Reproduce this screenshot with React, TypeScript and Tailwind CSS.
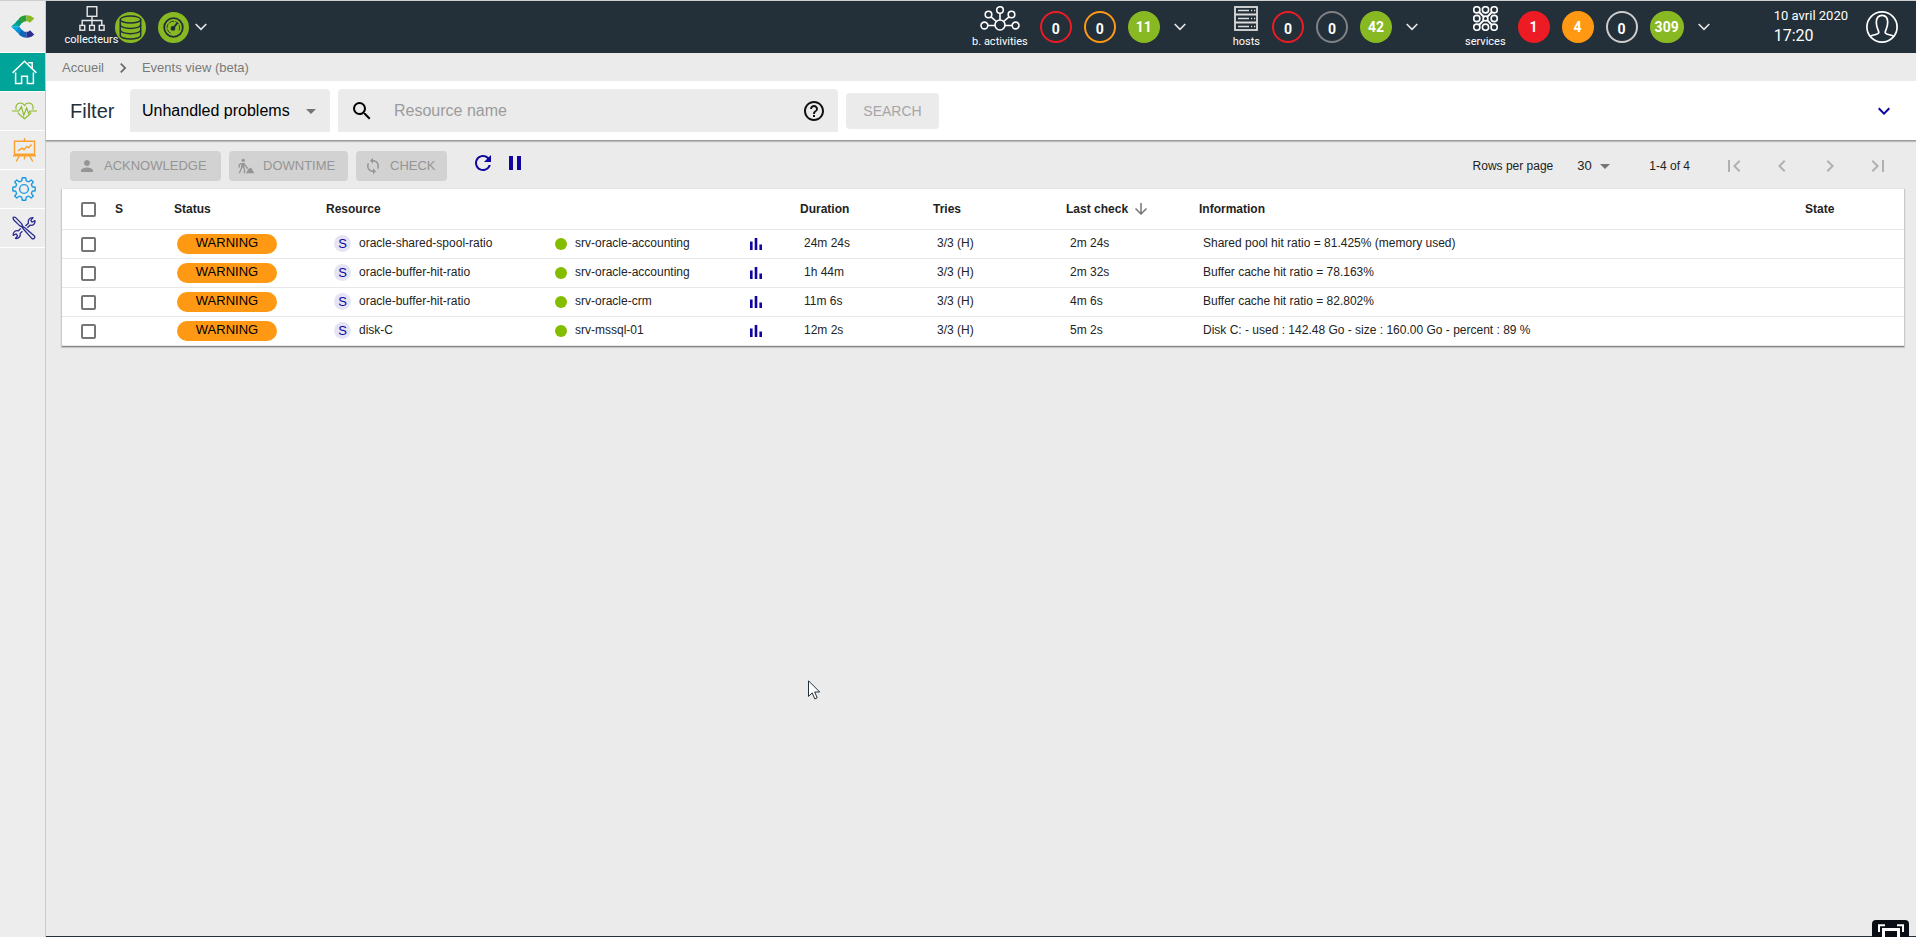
import React from "react";
import {
  MdArrowDownward,
  MdArrowDropDown,
  MdChevronLeft,
  MdChevronRight,
  MdExpandMore,
  MdFirstPage,
  MdHelpOutline,
  MdLastPage,
  MdLoop,
  MdPause,
  MdPerson,
  MdRefresh,
  MdSearch,
} from "react-icons/md";

type Tone = "redLine" | "orangeLine" | "grayLine" | "lightLine" | "green" | "red" | "orange";

const tones: Record<Tone, string> = {
  redLine: "border-2 border-[#ed1c24] pt-1",
  orangeLine: "border-2 border-[#ff9913] pt-1",
  grayLine: "border-2 border-[#818285] pt-1",
  lightLine: "border-2 border-[#cdcdcd] pt-1",
  green: "bg-[#88b922]",
  red: "bg-[#ed1c24]",
  orange: "bg-[#ff9913]",
};

function Counter({ value, tone }: { value: number; tone: Tone }) {
  return (
    <a
      href="#counter"
      className={`flex h-8 min-w-8 items-center justify-center rounded-full px-[5px] font-[Roboto,sans-serif] text-sm leading-4 font-bold text-white ${tones[tone]}`}
    >
      {value}
    </a>
  );
}

function HeaderChevron({ label }: { label: string }) {
  return (
    <button type="button" aria-label={label} className="ml-[2px] flex">
      <svg width="12" height="8" viewBox="0 0 12 8" fill="none" stroke="#e6e6e6" strokeWidth="1.6">
        <path d="M0.7 1 L6 6.4 L11.3 1" />
      </svg>
    </button>
  );
}

function Stack({ label, tight = false, children }: { label: string; tight?: boolean; children: React.ReactNode }) {
  return (
    <div className={`flex h-full flex-col items-center pt-[5px] ${tight ? "gap-[2px]" : "gap-1"}`}>
      {children}
      <span className="font-[Roboto,sans-serif] text-[11px] leading-[14px] whitespace-nowrap text-white">{label}</span>
    </div>
  );
}

function PollerIcon() {
  return (
    <svg width="26" height="25" viewBox="0 0 26 25" fill="none" stroke="#e8e8e8" strokeWidth="1.4">
      <rect x="8.2" y="0.7" width="9.6" height="9.6" />
      <path d="M13 10.5V19M3.2 19V14.5H22.8V19" />
      <rect x="0.9" y="19.4" width="4.8" height="4.8" />
      <rect x="10.6" y="19.4" width="4.8" height="4.8" />
      <rect x="20.3" y="19.4" width="4.8" height="4.8" />
    </svg>
  );
}

function ActivitiesIcon() {
  return (
    <svg width="40" height="25" viewBox="0 0 40 25" fill="none" stroke="#ffffff" strokeWidth="1.6">
      <circle cx="20" cy="19" r="5" />
      <circle cx="20" cy="4" r="3.3" />
      <circle cx="8.5" cy="8.5" r="3.3" />
      <circle cx="31.5" cy="8.5" r="3.3" />
      <circle cx="4.4" cy="19.5" r="3.4" />
      <circle cx="35.6" cy="19.5" r="3.4" />
      <path d="M20 7.3V14M11 10.8L16.4 15.5M29 10.8L23.6 15.5M7.8 19.5H15M25 19.5H32.2" />
    </svg>
  );
}

function HostsIcon() {
  return (
    <svg width="24" height="25" viewBox="0 0 24 25" fill="none" stroke="#dcdcdc" strokeWidth="1.8">
      <rect x="1" y="1" width="22" height="23" />
      <path d="M1 8.5H23M1 16.5H23" />
      <path d="M4 4.6H15M4 12.5H15M4 20.4H15" strokeWidth="1.5" />
      <path d="M17 4.6H18.2M20 4.6H21.2M17 12.5H18.2M20 12.5H21.2M17 20.4H18.2M20 20.4H21.2" strokeWidth="1.5" />
    </svg>
  );
}

function ServicesIcon() {
  const spots = [3.8, 12.5, 21.2];
  return (
    <svg width="25" height="25" viewBox="0 0 25 25" fill="none" stroke="#ffffff" strokeWidth="1.6">
      {spots.map((y) => spots.map((x) => <circle key={`${x}-${y}`} cx={x} cy={y} r={x === 12.5 && y === 12.5 ? 2.4 : 3.1} />))}
      <path d="M6 6L10.6 10.6M19 6L14.4 10.6M6 19L10.6 14.4M19 19L14.4 14.4" strokeWidth="2" />
    </svg>
  );
}

function DatabaseIcon() {
  return (
    <svg width="31" height="31" viewBox="0 0 31 31" fill="none" stroke="#232f39" strokeWidth="1.5">
      <circle cx="15.5" cy="15.5" r="15.5" fill="#88b922" stroke="none" />
      <ellipse cx="15.5" cy="7.6" rx="10.2" ry="3.5" />
      <path d="M5.3 7.6V23.4C5.3 25.4 9.8 27 15.5 27S25.7 25.4 25.7 23.4V7.6" />
      <path d="M5.3 12.8C5.3 14.8 9.8 16.4 15.5 16.4S25.7 14.8 25.7 12.8M5.3 18.1C5.3 20.1 9.8 21.7 15.5 21.7S25.7 20.1 25.7 18.1" />
    </svg>
  );
}

function LatencyIcon() {
  return (
    <svg width="31" height="31" viewBox="0 0 31 31" fill="none" stroke="#232f39" strokeWidth="1.6">
      <circle cx="15.5" cy="15.5" r="15.5" fill="#88b922" stroke="none" />
      <circle cx="15.5" cy="15.5" r="9.3" strokeWidth="1.8" />
      <path d="M12.6 21.2A6.3 6.3 0 1 1 20.9 18.6" strokeDasharray="5 1" strokeWidth="0.9" />
      <circle cx="15" cy="16.4" r="1.6" fill="#232f39" />
      <path d="M15.4 16L19.6 10.6" strokeWidth="1.8" />
    </svg>
  );
}

function UserIcon() {
  return (
    <svg width="32" height="32" viewBox="0 0 32 32" fill="none" stroke="#ffffff" strokeWidth="1.7">
      <circle cx="16" cy="16" r="15.1" />
      <path d="M4 25.4C7 23.4 12.5 23.8 12.8 21.6C13 19.4 10.3 17.4 10.3 11.3C10.3 6.8 12.6 4.3 16 4.3S21.7 6.8 21.7 11.3C21.7 17.4 19 19.4 19.2 21.6C19.5 23.8 25 23.4 28 25.4" />
    </svg>
  );
}

function Logo() {
  return (
    <svg width="24" height="23" viewBox="0 0 24 23">
      <path d="M0 11.5L7.5 5.2L10 8.4L8.4 11.5Z" fill="#00a79c" />
      <path d="M0 11.5L8.4 11.5L10 14.9L7.5 18.2Z" fill="#00a8e8" />
      <path d="M4.5 7.5L9.5 2.2L12.6 7L10 8.6L8.6 11Z" fill="#009e7f" />
      <path d="M8.2 3.2C10.4 1.2 12.8 0.3 15.3 0.3L15.6 6.2C13.2 6.2 11.4 6.9 10 8.8Z" fill="#2a9d35" />
      <path d="M15.3 0.3C18.6 0.2 21 1.4 23.2 3.6L19 7.8C18 6.8 17 6.2 15.6 6.2Z" fill="#88b922" />
      <path d="M4.5 15.4L9.5 20.7L12.8 16L10 14.2L8.6 12Z" fill="#0a8fdc" />
      <path d="M8.2 19.8C10.4 21.8 12.8 22.7 15.3 22.7L15.6 16.8C13.2 16.8 11.4 16.1 10 14.2Z" fill="#1065b5" />
      <path d="M15.3 22.7C18.6 22.8 21 21.6 23.2 19.4L19 15.2C18 16.2 17 16.8 15.6 16.8Z" fill="#2b2f92" />
    </svg>
  );
}

function HomeIcon() {
  return (
    <svg width="25" height="25" viewBox="0 0 25 25" fill="none" stroke="#ffffff" strokeWidth="1.5">
      <path d="M0.6 12.9L12.5 1.2L24.4 12.9" />
      <path d="M16.2 2.8H20.2V8.4" />
      <path d="M3.6 12.5V23.6H9.6V16.2H15.4V23.6H21.4V12.5" />
    </svg>
  );
}

function HeartIcon() {
  return (
    <svg width="25" height="18" viewBox="0 0 25 18" fill="none" stroke="#88b922" strokeWidth="1.1">
      <path d="M4.2 7.6C3 3.6 5.4 1 8.2 1C10.2 1 11.8 2.2 12.5 3.6C13.2 2.2 14.8 1 16.8 1C19.6 1 22 3.6 20.8 7.6M5.8 10.6C7.4 13 10 14.8 12.5 16.8C15 14.8 17.6 13 19.2 10.6" />
      <path d="M0 9H6.8L9.4 4.6L11.8 13.4L14.6 5.8L16.6 11.4L17.8 9H25" />
    </svg>
  );
}

function ReportIcon() {
  return (
    <svg width="23" height="24" viewBox="0 0 23 24" fill="none" stroke="#f9a12e" strokeWidth="1.4">
      <path d="M11.5 0V3M1.5 3.2H21.5V16.2H1.5ZM0 17.8H23" />
      <path d="M5 12.8L9 10.2L11 11.8L14 8.4L15.5 9.8L18.6 6.6" />
      <path d="M6.4 18L3.2 23.4M16.6 18L19.8 23.4M11.5 18V21.6" />
    </svg>
  );
}

function GearIcon() {
  return (
    <svg width="24" height="24" viewBox="0 0 24 24" fill="none" stroke="#1b9be0" strokeWidth="1.4" strokeLinejoin="round">
      <circle cx="12" cy="12" r="4.4" />
      <path d="M10.2 0.8H13.8L14.3 3.8L16.8 4.8L19.2 3L21.3 5L19.4 7.4L20.3 9.8L23.2 10.3V13.7L20.3 14.2L19.4 16.6L21.3 19L19.2 21L16.8 19.2L14.3 20.2L13.8 23.2H10.2L9.7 20.2L7.2 19.2L4.8 21L2.7 19L4.6 16.6L3.7 14.2L0.8 13.7V10.3L3.7 9.8L4.6 7.4L2.7 5L4.8 3L7.2 4.8L9.7 3.8Z" />
    </svg>
  );
}

function ToolsIcon() {
  return (
    <svg width="24" height="24" viewBox="0 0 24 24" fill="none" stroke="#2a2b8f" strokeWidth="1.3" strokeLinejoin="round">
      <path d="M1 2.2C1 1.2 2.6 0.8 3.4 1.4L9.6 7.6L10.6 10.2L13.4 12.2L22.4 20C23.6 21.4 21.6 23.6 20 22.6L12 13.8L10 10.8L7.6 9.6L1.8 4Z" />
      <path d="M13.4 10L16.4 7.2C15.6 4.2 17.6 1.2 21 1.6L18.8 4.4L20 6.2L23 4.6C23.4 7.8 20.8 10 18 9.2L15.4 11.8" />
      <path d="M10.4 15.2L8.2 17.4C8.8 20.4 6.6 23 3.4 22.4L5.6 19.8L4.2 17.8L1.2 19.4C0.8 16.4 3.2 13.8 6.4 14.8L8.8 12.4" />
    </svg>
  );
}

function DowntimeIcon() {
  return (
    <svg width="18" height="18" viewBox="0 0 24 24" fill="none" stroke="currentColor" strokeWidth="1.8">
      <circle cx="8.4" cy="4.4" r="2.2" fill="currentColor" stroke="none" />
      <path d="M5.6 8.2L9.4 7.6L10.2 14L5.6 13.6Z" fill="currentColor" stroke="none" />
      <path d="M5.6 8.2L3 10.4V14M9 8.4L14.4 15.4M6.6 13L5.2 17L3 21.6M8.4 13L10 16.4V21.6" />
      <path d="M12 21.6L15 16.2L17.6 14.4H19L23 21.6Z" fill="currentColor" stroke="none" />
    </svg>
  );
}

function GraphIcon() {
  return (
    <svg width="12" height="12" viewBox="0 0 12 12" fill="#10069f">
      <path d="M0 3.6H2.6V12H0ZM4.7 0H7.3V12H4.7ZM9.4 6.6H12V12H9.4Z" />
    </svg>
  );
}

const menu = [
  { name: "Accueil", icon: <HomeIcon />, active: true },
  { name: "Supervision", icon: <HeartIcon />, active: false },
  { name: "Rapports", icon: <ReportIcon />, active: false },
  { name: "Configuration", icon: <GearIcon />, active: false },
  { name: "Administration", icon: <ToolsIcon />, active: false },
];

function Sidebar() {
  return (
    <nav className="flex w-[46px] shrink-0 flex-col border-r border-[#cbcbcb] bg-[#ededed]">
      <a href="#home" aria-label="Centreon" className="flex h-[52px] items-center justify-center border-b border-white">
        <Logo />
      </a>
      {menu.map((item) => (
        <a
          key={item.name}
          href="#menu"
          aria-label={item.name}
          className={`flex h-[39px] items-center justify-center border-b border-white pl-[3px] ${item.active ? "bg-[#00a499]" : ""}`}
        >
          {item.icon}
        </a>
      ))}
    </nav>
  );
}

function TopBar() {
  return (
    <header className="flex h-[52px] items-center bg-[#232f39] pr-[18px] pl-[22px]">
      <div className="flex h-full items-center">
        <div className="flex h-full w-[47px] justify-center">
          <Stack label="collecteurs" tight>
            <PollerIcon />
          </Stack>
        </div>
        <div className="flex items-center gap-3">
          <DatabaseIcon />
          <LatencyIcon />
        </div>
        <div className="ml-1 flex">
          <HeaderChevron label="collecteurs" />
        </div>
      </div>
      <div className="ml-auto flex h-full items-center gap-[47px]">
        <div className="flex h-full items-center gap-3">
          <Stack label="b. activities">
            <ActivitiesIcon />
          </Stack>
          <Counter value={0} tone="redLine" />
          <Counter value={0} tone="orangeLine" />
          <Counter value={11} tone="green" />
          <HeaderChevron label="b. activities" />
        </div>
        <div className="flex h-full items-center gap-3">
          <Stack label="hosts">
            <HostsIcon />
          </Stack>
          <Counter value={0} tone="redLine" />
          <Counter value={0} tone="grayLine" />
          <Counter value={42} tone="green" />
          <HeaderChevron label="hosts" />
        </div>
        <div className="flex h-full items-center gap-3">
          <Stack label="services">
            <ServicesIcon />
          </Stack>
          <Counter value={1} tone="red" />
          <Counter value={4} tone="orange" />
          <Counter value={0} tone="lightLine" />
          <Counter value={309} tone="green" />
          <HeaderChevron label="services" />
        </div>
      </div>
      <div className="ml-16 font-[Roboto,sans-serif] text-white">
        <div className="text-[13px] leading-[18px]">10 avril 2020</div>
        <div className="text-base leading-[22px]">17:20</div>
      </div>
      <button type="button" aria-label="Profil" className="ml-[18px] flex">
        <UserIcon />
      </button>
    </header>
  );
}

function FilterBar() {
  return (
    <section className="flex h-[60px] items-center gap-2 border-b border-[#9c9c9c] bg-white pr-5 pl-6 shadow-[0_1px_1px_rgba(0,0,0,0.2)]">
      <h6 className="w-[52px] text-xl leading-6 text-[#232f39]">Filter</h6>
      <div className="relative w-[200px]">
        <select
          aria-label="Filter"
          className="h-[43px] w-full appearance-none rounded-t bg-[#ebebeb] pl-3 text-base text-black outline-none"
        >
          <option>Unhandled problems</option>
        </select>
        <MdArrowDropDown className="pointer-events-none absolute top-[10px] right-[7px] size-6 text-[#757575]" />
      </div>
      <div className="flex h-[43px] w-[500px] items-center rounded-t bg-[#ebebeb] px-3">
        <MdSearch className="size-6 shrink-0 text-black" />
        <input
          type="text"
          aria-label="Resource name"
          placeholder="Resource name"
          className="ml-5 min-w-0 flex-1 bg-transparent text-base text-black outline-none placeholder:text-[#9b9b9b]"
        />
        <button type="button" aria-label="Help" className="flex">
          <MdHelpOutline className="size-6 text-[#111]" />
        </button>
      </div>
      <button type="button" disabled className="h-9 w-[93px] rounded bg-[#ebebeb] text-sm text-[#a6a6a6]">
        SEARCH
      </button>
      <button type="button" aria-label="Expand" className="ml-auto flex">
        <MdExpandMore className="size-6 text-[#10069f]" />
      </button>
    </section>
  );
}

const actionClass = "flex h-[30px] items-center gap-2 rounded bg-[#d2d2d2] pl-2 text-[13px] text-[#959595]";

function Toolbar() {
  return (
    <div className="flex h-[48px] items-start justify-between pt-[10px] pr-[14px] pl-6">
      <div className="flex items-start gap-2">
        <button type="button" disabled className={`${actionClass} w-[151px]`}>
          <MdPerson className="size-[18px]" />
          ACKNOWLEDGE
        </button>
        <button type="button" disabled className={`${actionClass} w-[119px]`}>
          <DowntimeIcon />
          DOWNTIME
        </button>
        <button type="button" disabled className={`${actionClass} w-[91px]`}>
          <MdLoop className="size-[18px]" />
          CHECK
        </button>
        <button type="button" aria-label="Refresh" className="ml-4 flex">
          <MdRefresh className="size-6 text-[#10069f]" />
        </button>
        <button type="button" aria-label="Pause" className="flex">
          <MdPause className="size-6 text-[#10069f]" />
        </button>
      </div>
      <div className="flex h-[30px] items-center text-xs text-[#222]">
        <label htmlFor="rows-per-page">Rows per page</label>
        <div className="relative ml-6 w-[40px]">
          <select id="rows-per-page" className="block h-6 w-full appearance-none bg-transparent text-[13px] outline-none">
            <option>30</option>
          </select>
          <MdArrowDropDown className="pointer-events-none absolute top-0 right-0 size-6 text-[#757575]" />
        </div>
        <span className="mr-5 ml-8">1-4 of 4</span>
        <div className="flex text-[#b0b0b0]">
          <button type="button" disabled aria-label="First page" className="px-3">
            <MdFirstPage className="size-6" />
          </button>
          <button type="button" disabled aria-label="Previous page" className="px-3">
            <MdChevronLeft className="size-6" />
          </button>
          <button type="button" disabled aria-label="Next page" className="px-3">
            <MdChevronRight className="size-6" />
          </button>
          <button type="button" disabled aria-label="Last page" className="px-3">
            <MdLastPage className="size-6" />
          </button>
        </div>
      </div>
    </div>
  );
}

const rows = [
  {
    resource: "oracle-shared-spool-ratio",
    host: "srv-oracle-accounting",
    duration: "24m 24s",
    tries: "3/3 (H)",
    last: "2m 24s",
    info: "Shared pool hit ratio = 81.425% (memory used)",
  },
  {
    resource: "oracle-buffer-hit-ratio",
    host: "srv-oracle-accounting",
    duration: "1h 44m",
    tries: "3/3 (H)",
    last: "2m 32s",
    info: "Buffer cache hit ratio = 78.163%",
  },
  {
    resource: "oracle-buffer-hit-ratio",
    host: "srv-oracle-crm",
    duration: "11m 6s",
    tries: "3/3 (H)",
    last: "4m 6s",
    info: "Buffer cache hit ratio = 82.802%",
  },
  {
    resource: "disk-C",
    host: "srv-mssql-01",
    duration: "12m 2s",
    tries: "3/3 (H)",
    last: "5m 2s",
    info: "Disk C: - used : 142.48 Go - size : 160.00 Go - percent : 89 %",
  },
];

function Check({ label }: { label: string }) {
  return (
    <input
      type="checkbox"
      aria-label={label}
      className="block size-[15px] appearance-none rounded-[2px] border-2 border-[#757575] bg-white"
    />
  );
}

function EventsTable() {
  return (
    <div className="mr-3 ml-4 bg-white shadow-[0_1px_1px_1px_rgba(0,0,0,0.15),0_1px_0_0_#9c9c9c]">
      <table className="w-full table-fixed border-collapse text-left text-xs text-[#232323]">
        <colgroup>
          <col className="w-[49px]" />
          <col className="w-[59px]" />
          <col className="w-[152px]" />
          <col className="w-[225px]" />
          <col className="w-[195px]" />
          <col className="w-[54px]" />
          <col className="w-[133px]" />
          <col className="w-[133px]" />
          <col className="w-[133px]" />
          <col />
          <col className="w-[103px]" />
        </colgroup>
        <thead>
          <tr className="h-10 border-b border-[#e8e8e8]">
            <th className="pt-[2px] pl-[19px]">
              <Check label="Select all" />
            </th>
            <th className="pl-1">S</th>
            <th className="pl-1">Status</th>
            <th className="pl-1" colSpan={3}>
              Resource
            </th>
            <th className="pl-1">Duration</th>
            <th className="pl-1">Tries</th>
            <th className="pl-1">
              <button type="button" className="flex items-center gap-1 font-bold">
                Last check
                <MdArrowDownward className="size-[18px] text-[#757575]" />
              </button>
            </th>
            <th className="pl-1">Information</th>
            <th className="pl-1">State</th>
          </tr>
        </thead>
        <tbody>
          {rows.map((row, index) => (
            <tr key={index} className="h-[29px] border-b border-[#e8e8e8]">
              <td className="pt-[1px] pl-[19px]">
                <Check label={`Select ${row.resource}`} />
              </td>
              <td />
              <td className="pl-[7px]">
                <span className="flex h-5 w-[100px] items-center justify-center rounded-full bg-[#ff9913] pb-[1px] text-[13px] text-black">
                  WARNING
                </span>
              </td>
              <td className="pl-3">
                <a href="#resource" className="flex items-center gap-2">
                  <span className="flex size-[17px] items-center justify-center rounded-full bg-[#e5e4f4] text-[13px] text-[#10069f]">
                    S
                  </span>
                  <span className="pb-[2px]">{row.resource}</span>
                </a>
              </td>
              <td className="pl-2">
                <a href="#host" className="flex items-center gap-2">
                  <span className="size-3 rounded-full bg-[#84bd00]" />
                  <span className="pb-[2px]">{row.host}</span>
                </a>
              </td>
              <td className="pl-2">
                <button type="button" aria-label="Graph" className="flex">
                  <GraphIcon />
                </button>
              </td>
              <td className="pb-[2px] pl-2">{row.duration}</td>
              <td className="pb-[2px] pl-2">{row.tries}</td>
              <td className="pb-[2px] pl-2">{row.last}</td>
              <td className="pb-[2px] pl-2">{row.info}</td>
              <td />
            </tr>
          ))}
        </tbody>
      </table>
    </div>
  );
}

export default function App() {
  return (
    <div className="relative flex min-h-screen border-t border-[#cfcfcf] bg-[#ebebeb] font-['Liberation_Sans',Arial,sans-serif]">
      <Sidebar />
      <div className="flex min-w-0 flex-1 flex-col border-b border-[#232f39]">
        <TopBar />
        <nav aria-label="Breadcrumb" className="flex h-7 items-center gap-[9px] pt-[2px] pl-4 text-[13px] text-[#7a7a7a]">
          <a href="#accueil">Accueil</a>
          <MdChevronRight className="size-5 text-[#666]" />
          <a href="#events">Events view (beta)</a>
        </nav>
        <main>
          <FilterBar />
          <Toolbar />
          <EventsTable />
        </main>
      </div>

      <svg
        className="pointer-events-none absolute top-[679px] left-[808px]"
        width="13"
        height="20"
        viewBox="0 0 13 20"
        fill="#ffffff"
        stroke="#232f39"
        strokeWidth="1"
      >
        <path d="M0.5 0.8V16.4L4.2 12.9L6.8 18.9L9.2 17.9L6.7 12H11.7Z" />
      </svg>

      <button
        type="button"
        aria-label="Fullscreen"
        className="absolute right-[7px] bottom-0 flex h-[17px] w-[37px] items-start justify-center rounded-t bg-[#0b0e14]"
      >
        <svg width="26" height="17" viewBox="0 0 26 17" fill="none" stroke="#ffffff">
          <path d="M1 12V5.2H7M19 5.2H25V12" strokeWidth="2" />
          <path d="M5.5 17V9.5H20.5V17" strokeWidth="3" />
        </svg>
      </button>
    </div>
  );
}
